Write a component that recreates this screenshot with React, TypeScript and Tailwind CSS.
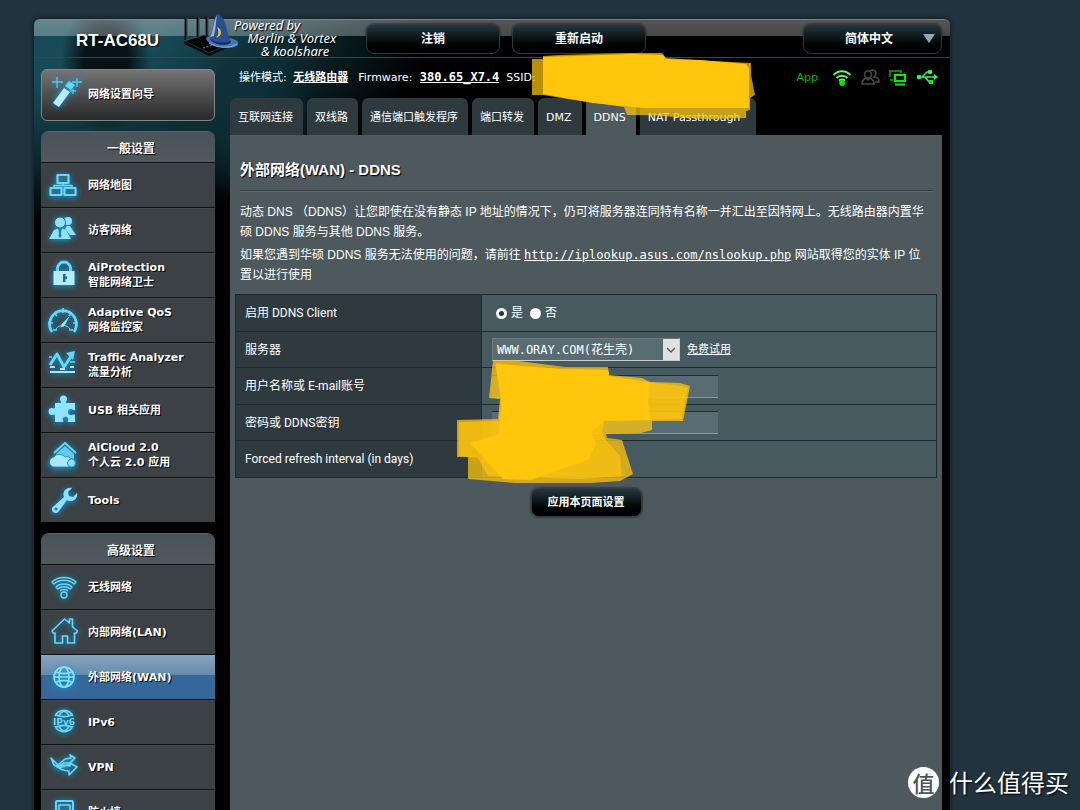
import type { ReactNode } from "react";

const cjk = "font-['DejaVu_Sans','Noto_Sans_CJK_SC',sans-serif]";
const arial = "font-['Liberation_Sans','Noto_Sans_CJK_SC',sans-serif]";

const darkButton =
  "rounded-lg border border-[#33393b] bg-linear-to-b from-[#23383e] via-[#0a1214] to-black font-bold text-white shadow-[0_0_2px_#000]";

function Icon({ children }: { children: ReactNode }) {
  return (
    <svg
      width="30"
      height="30"
      viewBox="0 0 30 30"
      fill="none"
      stroke="#6bd6fb"
      strokeWidth="1.6"
      strokeLinejoin="round"
      className="shrink-0 overflow-visible drop-shadow-[0_1px_3px_#0aa5e6]"
    >
      {children}
    </svg>
  );
}

const generalMenu = [
  {
    label: ["网络地图"],
    icon: (
      <g strokeWidth="2.2" fill="#2f6f86">
        <rect x="9.500" y="5" width="11" height="8" />
        <rect x="2.500" y="18" width="11" height="7" />
        <rect x="16.500" y="18" width="11" height="7" />
        <path d="M15 13v3M6 18v-2.500h18V18" fill="none" strokeWidth="1.4" />
      </g>
    ),
  },
  {
    label: ["访客网络"],
    icon: (
      <g fill="#8fe2ff" stroke="none">
        <circle cx="20" cy="6" r="4" />
        <path d="M19 11h3l6 9h-6l-5-6z" />
        <circle cx="12" cy="7.500" r="5.500" stroke="#3b4144" strokeWidth="0.8" />
        <path d="M1 24l5-9 4-1.500 2 9 2-9 4 1.500 5 9z" />
        <path d="M12 14l-1.500 7 1.500 2 1.500-2z" fill="#1d7fa3" />
      </g>
    ),
  },
  {
    label: ["AiProtection", "智能网络卫士"],
    icon: (
      <g>
        <path d="M9.500 12V8.500a6.500 6.500 0 0 1 13 0V12" strokeWidth="2.800" />
        <rect x="5.500" y="11" width="21" height="14" fill="#b5ecff" stroke="none" />
        <path d="M15 14h2.500v2.500H19v2.500h-1.500v3H15z" fill="#20718f" stroke="none" />
      </g>
    ),
  },
  {
    label: ["Adaptive QoS", "网络监控家"],
    icon: (
      <g strokeWidth="2.600">
        <path d="M4 27A13.500 13.500 0 1 1 26 27" />
        <path d="M8 24A8.500 8.500 0 0 1 22 24" strokeWidth="1" />
        <path
          d="M15 3V8M6 8l3 3M24 8l-3 3M0 18h5M30 18h-5M5 25h4M25 25h-4"
          strokeWidth="1.600"
        />
        <path d="M21 12l-5 9-3 1 1-3z" fill="#a7e9ff" strokeWidth="0.8" />
      </g>
    ),
  },
  {
    label: ["Traffic Analyzer", "流量分析"],
    icon: (
      <g>
        <path d="M2 15l7-11 7 13 8-12" strokeWidth="3" />
        <path d="M18 3l9-2-2 9z" fill="#6bd6fb" stroke="none" />
        <path d="M2 17h5M12 19h5M22 17h4M2 22h25" stroke="#a5e7ff" strokeWidth="2" />
        <path d="M1 7h3M22 12h5" />
      </g>
    ),
  },
  {
    label: ["USB 相关应用"],
    icon: (
      <path
        d="M7 8h6c1-1-1-2-1-4a3.500 3.500 0 0 1 7 0c0 2-2 3-1 4h9v7c-1 1-2-1-4-1a3 3 0 0 0 0 6c2 0 3-1 4 0v7h-7c-1-1 1-2 0-4a3 3 0 0 0-5 0c-1 2 1 3 0 4H7v-7c-1-1-2 0-3 0a3.500 3.500 0 0 1 0-7c1 0 2 1 3 0z"
        fill="#91e3ff"
        stroke="none"
      />
    ),
  },
  {
    label: ["AiCloud 2.0", "个人云 2.0 应用"],
    icon: (
      <g>
        <path d="M6 13L17 3l11 10" strokeWidth="2" />
        <path d="M8 14l9-8 9 8v6H8z" fill="#5ccdf5" stroke="none" />
        <path
          d="M7 27a5 5 0 0 1-1-10c2-4 9-3 11 0 2-1 5 0 6 2a4 4 0 0 1 1 8z"
          fill="#a6e9ff"
          stroke="#2b7591"
          strokeWidth="0.8"
        />
        <circle cx="23.500" cy="23" r="4" fill="#83deff" stroke="#2b7591" strokeWidth="0.8" />
      </g>
    ),
  },
  {
    label: ["Tools"],
    icon: (
      <path
        d="M24 3l-4 4 1 4 4 1 4-4c1 4-2 8-6 8-2 0-3 0-4-1l-8 11c-1 2-4 3-6 1s-1-5 1-6l10-9c-2-5 2-10 8-9zM8 22.500a1.500 1.500 0 1 0 .1 0z"
        fill="#8ce1ff"
        fillRule="evenodd"
        stroke="none"
      />
    ),
  },
];

const advancedMenu = [
  {
    label: ["无线网络"],
    icon: (
      <g strokeWidth="1.400">
        <path d="M4 10c6-6 18-6 24 0l-2 2c-5-5-15-5-20 0z" />
        <path d="M8 15c4-4 12-4 16 0l-2 2c-3-3-9-3-12 0z" />
        <path d="M12 19c2-2 6-2 8 0" />
        <circle cx="16" cy="23" r="3" />
      </g>
    ),
  },
  {
    label: ["内部网络(LAN)"],
    icon: (
      <path d="M4 14L16.500 2l5 4V2h3v8l5 4-1 2h-2v10h-7v-7h-5v7H7V16H5z" />
    ),
  },
  {
    label: ["外部网络(WAN)"],
    active: true,
    icon: (
      <g stroke="#8be3ff">
        <circle cx="16" cy="15" r="10" />
        <ellipse cx="16" cy="15" rx="5" ry="10" />
        <path d="M8 10c5 2 11 2 16 0M6 15h20M8 20c5-2 11-2 16 0" />
      </g>
    ),
  },
  {
    label: ["IPv6"],
    icon: (
      <g>
        <path d="M7 9a10 10 0 0 1 18 0M7 19a10 10 0 0 0 18 0M8 8c5 2 11 2 16 0M8 20c5-2 11-2 16 0M11 9c1-3 2-4 5-5 3 1 4 2 5 5M11 19c1 3 2 4 5 5 3-1 4-2 5-5" />
        <text
          x="16"
          y="17.500"
          textAnchor="middle"
          fill="#6bd6fb"
          stroke="none"
          className="font-['DejaVu_Sans',sans-serif] text-[9px] font-bold"
        >
          IPv6
        </text>
      </g>
    ),
  },
  {
    label: ["VPN"],
    icon: (
      <g>
        <path d="M3 6l7 7 7-6 6-1-1-3 5 3-5 5-6 0-6 4-4-2z" fill="#2a7f9e" />
        <path d="M8 14c5 4 10 5 13 5v4l8-8-7-4v3c-4-1-9-1-14 0zM9 15c4 1 8 0 12-3" />
      </g>
    ),
  },
  {
    label: ["防火墙"],
    icon: (
      <g>
        <rect x="8" y="4" width="17" height="22" rx="1" strokeWidth="2" />
        <rect x="11" y="8" width="11" height="8" fill="#2c7088" />
      </g>
    ),
  },
];

type MenuItem = { label: string[]; icon: ReactNode; active?: boolean };

function Menu({ title, items }: { title: string; items: MenuItem[] }) {
  return (
    <nav className="overflow-hidden rounded-t-lg border-t border-[#5d676a]">
      <h2 className="flex h-[30px] items-center justify-center bg-linear-to-b from-[#4a5357] to-[#50595c] pt-1 pl-[6px] text-[12px] font-bold [text-shadow:1px_1px_0_#000]">
        {title}
      </h2>
      {items.map((item) => (
        <a
          key={item.label[0]}
          href="#"
          className={`flex h-[45px] items-center gap-[10px] border-t border-[#0e1112] pl-[7px] shadow-[inset_0_1px_0_#ffffff0a] ${
            item.active
              ? "bg-linear-to-b from-[#89a3bd] from-0% via-[#668bae] via-45% to-[#35689a] to-46%"
              : "bg-[#3b4144]"
          }`}
        >
          <Icon>{item.icon}</Icon>
          <span className="text-[11px] leading-[15px] font-bold whitespace-nowrap [text-shadow:1px_1px_0_#000]">
            {item.label.map((line) => (
              <span key={line} className="block">
                {line}
              </span>
            ))}
          </span>
        </a>
      ))}
    </nav>
  );
}

function RouterLogo() {
  return (
    <svg width="58" height="44" viewBox="0 0 58 44" className="shrink-0">
      <path d="M3 5v24M15 4v22M24 4v20" stroke="#07090a" strokeWidth="2.800" />
      <path d="M4 5v24M16 4v20M25 4v18" stroke="#7b8586" strokeWidth="0.700" />
      <path d="M1 28l20-6 26 9-21 9z" fill="#020303" stroke="#4b5355" strokeWidth="0.8" />
      <path d="M1 28v3l25 12v-3zM26 43l21-9v-3l-21 9z" fill="#0b0e0f" />
      <path d="M20 35l12-4" stroke="#278bb5" strokeWidth="1.300" strokeDasharray="2 1.500" />
      <path d="M23 25c3-3 27-2 32 4 2 5-8 7-16 5-8-1-16-5-16-9z" fill="#4676b8" />
      <path d="M27 25c3-7 3-14 5-20 1-5 4-5 7-1 5 6 5 18 9 24-4 6-18 4-21-3z" fill="#284f8e" />
      <path d="M34 2c-1 6-1 12-3 21l-4 1c4-7 3-15 7-22z" fill="#8fb4e4" />
      <path d="M26 25c5 5 15 6 22 3 1 5-17 6-22-3z" fill="#142c59" />
      <path d="M34 14c6 3 5 9-1 11 3-3 3-7 1-11z" fill="#f3c33c" />
      <path d="M26 30c8 5 20 6 28 1" fill="none" stroke="#95b9e6" strokeWidth="1" />
    </svg>
  );
}

const tabs = ["互联网连接", "双线路", "通信端口触发程序", "端口转发", "DMZ", "DDNS", "NAT Passthrough"];

function StatusIcons() {
  return (
    <div className="flex items-center gap-[8px]">
      <span className="mr-[6px] text-[11px] text-[#00b800]">App</span>
      <svg width="20" height="18" viewBox="0 0 20 18" fill="none" stroke="#6ef06e" strokeWidth="1.800">
        <path d="M1.500 6c5-5 12-5 17 0M4.500 9c3-3 8-3 11 0M7 11.500c2-1.500 4-1.500 6 0" />
        <circle cx="10" cy="14" r="2" fill="#00f000" stroke="#00f000" />
      </svg>
      <svg width="20" height="18" viewBox="0 0 20 18" fill="none" stroke="#4a4a4a" strokeWidth="1.500">
        <circle cx="8" cy="5.500" r="3.500" />
        <path d="M10 2c2-2 6-1 6 2 0 2-1 3-2 4 3 0 5 2 5 5h-4M2 15c0-3 2-5 4-6l2 2 2-2c2 1 4 3 4 6z" />
      </svg>
      <svg width="20" height="18" viewBox="0 0 20 18" fill="none" stroke="#00f000" strokeWidth="2">
        <path d="M5 11H2M2 8V2h11v2" stroke="#087e08" />
        <rect x="7" y="6" width="10" height="6" />
        <path d="M7 15.500h10" />
      </svg>
      <svg width="22" height="18" viewBox="0 0 22 18" fill="none" stroke="#35ef65" strokeWidth="1.600">
        <path d="M2 8h17M6 8l5-5h3M9 8l4 5h2" />
        <circle cx="3" cy="8" r="1.500" fill="#35ef65" />
        <circle cx="14" cy="3" r="1.500" fill="#86f5a0" />
        <path d="M18 5l4 3-4 3z" fill="#35ef65" stroke="none" />
        <rect x="13" y="11" width="4" height="4" fill="#00f000" stroke="none" />
      </svg>
    </div>
  );
}

function Row({ label, htmlFor, children }: { label: string; htmlFor?: string; children?: ReactNode }) {
  return (
    <tr className="h-[37px] even:h-[36px]">
      <th className="w-[246px] border border-[#212829] bg-[#2f3a3e] p-0 pl-[9px] text-left font-normal font-['Roboto','Noto_Sans_CJK_SC',sans-serif]">
        <label htmlFor={htmlFor}>{label}</label>
      </th>
      <td className="border border-[#212829] bg-[#475a5f] p-0 pl-[10px]">{children}</td>
    </tr>
  );
}

const inputClass =
  "block h-[23px] w-[226px] border-y border-t-[#232c2f] border-b-[#8b979a] bg-[#576c73] px-1 text-[12px]";

export default function App() {
  return (
    <div className={`relative h-screen overflow-hidden bg-[#21333e] pt-[19px] text-white ${cjk}`}>
      <div className="mr-[130px] ml-[34px] min-h-screen rounded-t-md bg-black bg-[radial-gradient(ellipse_45px_70px_at_72px_45px,#071317_50%,transparent_100%),radial-gradient(ellipse_65px_90px_at_215px_95px,#0e3039_20%,transparent_100%),radial-gradient(ellipse_390px_210px_at_10px_0px,#174b57_30%,#0c2a31_65%,transparent_100%)] bg-no-repeat shadow-[0_0_6px_#0d171c]">
        <header className="flex h-[39px] items-center rounded-t-md border-t border-b border-t-[#7c8587] border-b-[#3a4549] bg-[linear-gradient(to_bottom,#ffffff55_0,#ffffff48_16px,transparent_16px)] pr-2 text-[12px]">
          <div className="flex w-[332px] shrink-0 items-start">
            <h1 className="mt-[12px] ml-[42px] w-[107px] text-[17px] leading-5 font-bold whitespace-nowrap font-['Liberation_Sans',sans-serif] [text-shadow:1px_1px_1px_#000]">
              RT-AC68U
            </h1>
            <div className="-mt-[6px]">
              <RouterLogo />
            </div>
            <p className="-ml-[7px] text-[13px] leading-[13px] whitespace-pre italic font-['Noto_Sans',sans-serif] [text-shadow:1px_1px_1px_#000]">
              {"Powered by\n    Merlin & Vortex\n        & koolshare"}
            </p>
          </div>
          <button type="button" className={`h-[30px] w-[134px] ${darkButton}`}>
            注销
          </button>
          <button type="button" className={`ml-3 h-[30px] w-[134px] ${darkButton}`}>
            重新启动
          </button>
          <div className="relative ml-auto">
            <select
              aria-label="语言"
              className={`h-[30px] w-[139px] appearance-none pl-[41px] ${darkButton}`}
            >
              <option>简体中文</option>
            </select>
            <svg width="12" height="9" viewBox="0 0 12 9" className="pointer-events-none absolute top-[10px] right-[7px]">
              <path d="M0 0h12L6 9z" fill="#91a5b8" />
            </svg>
          </div>
        </header>

        <div className="flex gap-[15px] pr-2 pl-[7px]">
          <aside className="w-[174px] shrink-0 pt-[11px]">
            <a
              href="#"
              className="mb-[10px] flex h-[52px] items-center gap-[8px] rounded-md border border-[#858585] bg-linear-to-b from-[#757575] to-[#292929] pl-[8px] text-[11px] font-bold [text-shadow:1px_1px_0_#000]"
            >
              <svg
                width="30"
                height="36"
                viewBox="0 0 30 36"
                className="-mt-1 shrink-0 overflow-visible drop-shadow-[0_0_3px_#0aa5e6]"
              >
                <path d="M7 2v11M2 7h11M27 3v9M22 7h10M23 14v5M20 16h6" stroke="#55c8ef" strokeWidth="1.300" />
                <path d="M15 11l4-5 6 4-4 5z" fill="#65d7ff" />
                <path d="M14 13l6 4L9 32l-6-4z" fill="#b7ecff" />
              </svg>
              网络设置向导
            </a>
            <Menu title="一般设置" items={generalMenu} />
            <div className="h-[11px]" />
            <Menu title="高级设置" items={advancedMenu} />
          </aside>

          <main className="flex min-w-0 grow flex-col">
            <div className="relative">
              <div className="flex h-[40px] items-center justify-between pr-[4px] pl-[9px]">
                <p className="text-[11px] leading-4 whitespace-nowrap">
                  操作模式:{" "}
                  <a href="#" className="ml-[3px] font-bold underline">
                    无线路由器
                  </a>
                  <span className="mr-[4px] ml-[10px]">Firmware: </span>
                  <a
                    href="#"
                    className="text-[12px] leading-none font-bold underline font-['DejaVu_Sans_Mono',monospace]"
                  >
                    380.65_X7.4
                  </a>
                  <span className="ml-[7px]">SSID:</span>
                </p>
                <StatusIcons />
              </div>
              <div className="flex h-[37px] gap-[4px] text-[11px]">
                {tabs.map((tab) => (
                  <a
                    key={tab}
                    href="#"
                    className={`flex items-center rounded-t-md pt-[3px] pr-[10px] pl-[8px] whitespace-nowrap last:pr-[16px] ${
                      tab === "DDNS" ? "bg-[#4d595d]" : "bg-[#2f3a3e]"
                    }`}
                  >
                    {tab}
                  </a>
                ))}
              </div>
              <svg
                width="226"
                height="68"
                viewBox="530 52 226 68"
                fill="#ffc60c"
                className="pointer-events-none absolute -top-[6px] left-[300px]"
              >
                <path
                  d="M532 59l11 0v-3l17-1 71-2h31l4 5 45 3 40 2v12l4 20-5 3v12l-4 1v7l-40 1-60-4-19 0-3-8-56-8-25-4h-11z"
                  opacity="0.72"
                />
                <path d="M543 57l88-3 32 1 3 4 34 1 46 4 3 4v40h-76l-30 0-50-5-50-9z" />
              </svg>
            </div>

            <section className={`grow bg-[#4d595d] px-[5px] pt-[24px] text-[12px] ${arial}`}>
              <h2 className="mr-[4px] ml-[5px] border-b border-[#343d40] pb-[10px] text-[15px] leading-[21px] font-bold shadow-[0_1px_0_#5d6a6f] [text-shadow:1px_1px_1px_#000]">
                外部网络(WAN) - DDNS
              </h2>
              <div className="mt-[11px] pr-[8px] pl-[5px] leading-5">
                <p>
                  动态 DNS （DDNS）让您即使在没有静态 IP 地址的情况下，仍可将服务器连同特有名称一并汇出至因特网上。无线路由器内置华硕
                  DDNS 服务与其他 DDNS 服务。
                </p>
                <p className="mt-[3px]">
                  如果您遇到华硕 DDNS 服务无法使用的问题，请前往{" "}
                  <a href="#" className="underline font-['DejaVu_Sans_Mono',monospace]">
                    http://iplookup.asus.com/nslookup.php
                  </a>{" "}
                  网站取得您的实体 IP 位置以进行使用
                </p>
              </div>

              <div className="relative mt-[9px]">
                <table className="w-full table-fixed border-collapse">
                  <tbody>
                    <Row label="启用 DDNS Client">
                      <div className="flex items-center gap-[4px] pl-[4px]">
                        <input
                          id="ddns-on"
                          type="radio"
                          name="ddns"
                          defaultChecked
                          className="size-[11px] appearance-none rounded-full bg-white checked:border-[3px] checked:border-white checked:bg-[#333]"
                        />
                        <label htmlFor="ddns-on">是</label>
                        <input
                          id="ddns-off"
                          type="radio"
                          name="ddns"
                          className="ml-[3px] size-[11px] appearance-none rounded-full bg-white checked:border-[3px] checked:border-white checked:bg-[#333]"
                        />
                        <label htmlFor="ddns-off">否</label>
                      </div>
                    </Row>
                    <Row label="服务器" htmlFor="server">
                      <div className="flex items-center gap-[7px]">
                        <div className="relative">
                          <select
                            id="server"
                            className="block h-[23px] w-[188px] appearance-none border border-t-[#777] border-r-[#ccc] border-b-[#ccc] border-l-[#777] bg-[#576c73] pl-[4px] text-[12px] font-['DejaVu_Sans_Mono','Noto_Sans_CJK_SC',monospace]"
                          >
                            <option>WWW.ORAY.COM(花生壳)</option>
                          </select>
                          <svg
                            width="16"
                            height="21"
                            viewBox="0 0 16 21"
                            className="pointer-events-none absolute top-px right-px bg-[#e1e1e1]"
                          >
                            <path d="M4 9l4 4 4-4" fill="none" stroke="#555" strokeWidth="1.300" />
                          </svg>
                        </div>
                        <a href="#" className="text-[11px] underline">
                          免费试用
                        </a>
                      </div>
                    </Row>
                    <Row label="用户名称或 E-mail账号" htmlFor="user">
                      <input id="user" type="text" className={inputClass} />
                    </Row>
                    <Row label="密码或 DDNS密钥" htmlFor="key">
                      <input id="key" type="password" className={inputClass} />
                    </Row>
                    <Row label="Forced refresh interval (in days)" />
                  </tbody>
                </table>
                <svg
                  width="234"
                  height="124"
                  viewBox="456 360 234 124"
                  fill="#ffc60c"
                  className="pointer-events-none absolute top-[66px] left-[221px]"
                >
                  <path
                    d="M493 361L512 360L526 362L565 367L608 367L609 375L642 378L650 382L680 383L690 386L683 421L652 421L652 430L641 433L606 434L607 438L622 440L633 474L620 481L590 483L515 483L468 479L468 457L457 457L457 420L498 419L500 399L489 398Z"
                    opacity="0.75"
                  />
                  <path
                    d="M495 363L560 369L608 370L609 376L650 382L688 387L682 419L604 421L602 432L606 440L620 456L622 476L580 479L488 476L478 458L459 456L459 422L499 421L501 399L498 382Z"
                    opacity="0.65"
                  />
                  <path d="M496 364L560 369L608 370L609 376L650 383L648 402L651 420L604 421L592 432L596 444L588 460L530 480L503 479L490 465L470 443L499 434L501 400Z" />
                </svg>
              </div>

              <button
                type="submit"
                className={`mx-auto mt-[10px] block h-[29px] w-[111px] text-[11px] ${darkButton}`}
              >
                应用本页面设置
              </button>
            </section>
          </main>
        </div>
      </div>

      <div className="absolute right-[11px] bottom-[12px] flex items-center gap-[10px] text-[24px] leading-8 font-['Noto_Sans_CJK_SC',sans-serif] [text-shadow:1px_1px_2px_#000]">
        <span className="flex size-[31px] items-center justify-center rounded-full bg-white text-[22px] font-medium text-[#4a565a] [text-shadow:none]">
          值
        </span>
        什么值得买
      </div>
    </div>
  );
}
